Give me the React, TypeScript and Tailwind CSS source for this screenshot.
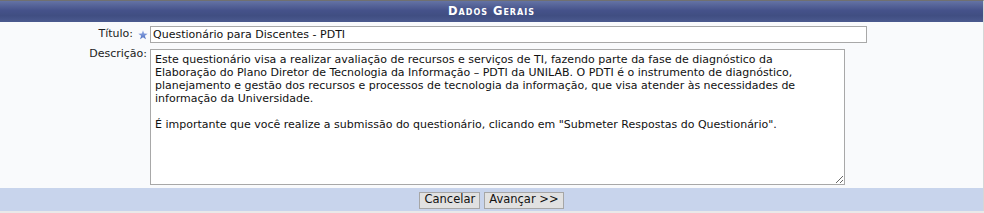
import { useState } from "react";

const desc =
  "Este questionário visa a realizar avaliação de recursos e serviços de TI, fazendo parte da fase de diagnóstico da\n" +
  "Elaboração do Plano Diretor de Tecnologia da Informação – PDTI da UNILAB. O PDTI é o instrumento de diagnóstico,\n" +
  "planejamento e gestão dos recursos e processos de tecnologia da informação, que visa atender às necessidades de\n" +
  "informação da Universidade.\n" +
  "\n" +
  'É importante que você realize a submissão do questionário, clicando em "Submeter Respostas do Questionário".';

function Star() {
  return (
    <svg width="10" height="10" viewBox="0 0 10 10" className="block">
      <defs>
        <linearGradient id="st" x1="0" y1="0" x2="0" y2="1">
          <stop offset="0" stopColor="#9fb4ea" />
          <stop offset="1" stopColor="#4a6cc0" />
        </linearGradient>
      </defs>
      <polygon
        points="5,0.3 6.2,3.6 9.7,3.7 6.9,5.8 7.9,9.3 5,7.3 2.1,9.3 3.1,5.8 0.3,3.7 3.8,3.6"
        fill="url(#st)"
      />
    </svg>
  );
}

export default function App() {
  const [title, setTitle] = useState("Questionário para Discentes - PDTI");
  const [text, setText] = useState(desc);

  return (
    <div
      className="w-[984px] h-[213px] bg-[#e9e9e9] text-[11px] text-[#222]"
      style={{ fontFamily: "Verdana, 'DejaVu Sans', sans-serif" }}
    >
      <div className="flex h-[211px] flex-col border-t border-[#707070] border-r border-r-[#d6d6d6] bg-[#f9fafc]">
        <div className="flex h-[21px] items-center justify-center bg-[linear-gradient(#6473a4,#45528a_45%,#404e82_70%,#4b5a8f)] text-[11.5px] font-bold tracking-[1px] text-white [font-variant:small-caps]">
          Dados Gerais
        </div>

        <div className="flex flex-1 flex-col pt-[4px]">
          <div className="flex items-center">
            <label className="w-[136px] pr-[3px] text-right">Título:</label>
            <span className="flex w-[14px] justify-center">
              <Star />
            </span>
            <input
              className="h-[17px] w-[717px] border border-[#a8a8a8] bg-white px-[2px] text-[11px] text-[#111] outline-none"
              value={title}
              onChange={(e) => setTitle(e.currentTarget.value)}
            />
          </div>

          <div className="mt-[6px] flex items-start">
            <label className="-mt-[1px] w-[150px] pr-[3px] text-right leading-[11px]">
              Descrição:
            </label>
            <textarea
              className="h-[136px] w-[695px] border border-[#a8a8a8] bg-white px-[4px] pt-[3px] text-[11px] leading-[13px] text-[#111] outline-none"
              value={text}
              onChange={(e) => setText(e.currentTarget.value)}
            />
          </div>
        </div>

        <div className="flex h-[23px] items-center justify-center gap-[4px] bg-[#c8d4ec]">
          <button className="mt-[1px] h-[17px] border border-[#a6a6a6] bg-[#e1e1e1] px-[4px] text-[11.5px] leading-none text-[#111]">
            Cancelar
          </button>
          <button className="mt-[1px] h-[17px] border border-[#a6a6a6] bg-[#e1e1e1] px-[4px] text-[11.5px] leading-none text-[#111]">
            Avançar &gt;&gt;
          </button>
        </div>
      </div>
    </div>
  );
}
